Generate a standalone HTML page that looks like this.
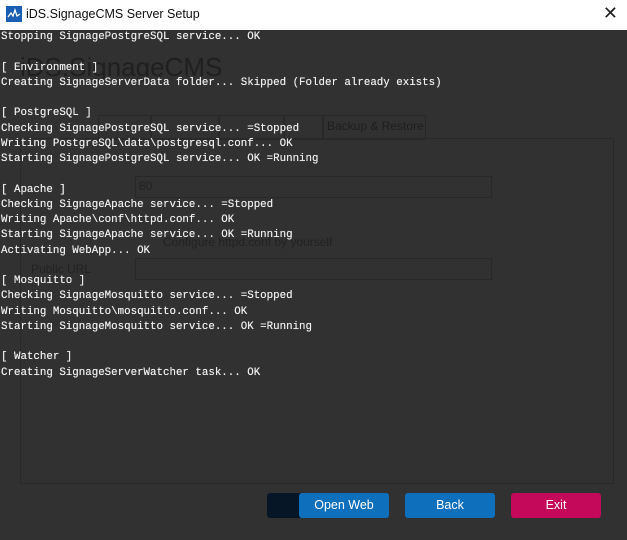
<!DOCTYPE html>
<html><head><meta charset="utf-8"><style>
body{margin:0;width:627px;height:540px;background:#313131;overflow:hidden;position:relative;font-family:"Liberation Sans",sans-serif}
.tb{position:absolute;left:0;top:0;width:627px;height:30px;background:#fff}
.tb .t{position:absolute;left:26px;top:7px;font-size:12.5px;color:#111}
.tb .x{position:absolute;right:9px;top:3px;font-size:18px;color:#222}
.ghost{position:absolute;color:#222}
.box{position:absolute;border:1px solid #282828}
pre{position:absolute;left:1px;top:30px;margin:0;font-family:"Liberation Mono",monospace;font-size:10.8px;line-height:15.25px;color:#ececec;z-index:5;text-shadow:0 0 0.4px #fff}
.btn{position:absolute;top:493px;height:25px;width:90px;border-radius:3px;color:#fff;font-size:12.5px;text-align:center;line-height:25px}
</style></head><body>
<div class="tb"><svg style="position:absolute;left:6px;top:6px" width="16" height="16"><rect width="16" height="16" fill="#1a5fb4"/><path d="M2 11 L5 7 L7 10 L9 4 L11 10 L14 8" stroke="#fff" fill="none" stroke-width="1.3"/></svg><span class="t">iDS.SignageCMS Server Setup</span><span class="x">✕</span></div>
<div class="ghost" style="left:20px;top:52px;font-size:26px;color:#1f1f1f">iDS.SignageCMS</div>
<div class="box" style="left:98px;top:115px;width:326px;height:23px"></div>
<div class="box" style="left:150px;top:115px;width:0;height:23px"></div>
<div class="box" style="left:218px;top:115px;width:0;height:23px"></div>
<div class="box" style="left:283px;top:115px;width:0;height:23px"></div>
<div class="box" style="left:322px;top:115px;width:0;height:23px"></div>
<div class="ghost" style="left:327px;top:119px;font-size:12px;color:#1e1e1e">Backup &amp; Restore</div>
<div class="box" style="left:20px;top:138px;width:592px;height:344px"></div>
<div class="box" style="left:135px;top:176px;width:355px;height:20px"></div>
<div class="ghost" style="left:139px;top:179px;font-size:12px">80</div>
<div class="ghost" style="left:163px;top:235px;font-size:12px">Configure httpd.conf by yourself</div>
<div class="ghost" style="left:31px;top:262px;font-size:12px">Public URL</div>
<div class="box" style="left:135px;top:258px;width:355px;height:20px"></div>
<pre>Stopping SignagePostgreSQL service... OK

[ Environment ]
Creating SignageServerData folder... Skipped (Folder already exists)

[ PostgreSQL ]
Checking SignagePostgreSQL service... =Stopped
Writing PostgreSQL\data\postgresql.conf... OK
Starting SignagePostgreSQL service... OK =Running

[ Apache ]
Checking SignageApache service... =Stopped
Writing Apache\conf\httpd.conf... OK
Starting SignageApache service... OK =Running
Activating WebApp... OK

[ Mosquitto ]
Checking SignageMosquitto service... =Stopped
Writing Mosquitto\mosquitto.conf... OK
Starting SignageMosquitto service... OK =Running

[ Watcher ]
Creating SignageServerWatcher task... OK</pre>
<div class="btn" style="left:267px;width:40px;background:#061626"></div>
<div class="btn" style="left:299px;background:#0e6fbd">Open Web</div>
<div class="btn" style="left:405px;background:#0e6fbd">Back</div>
<div class="btn" style="left:511px;background:#c4085a">Exit</div>
</body></html>
